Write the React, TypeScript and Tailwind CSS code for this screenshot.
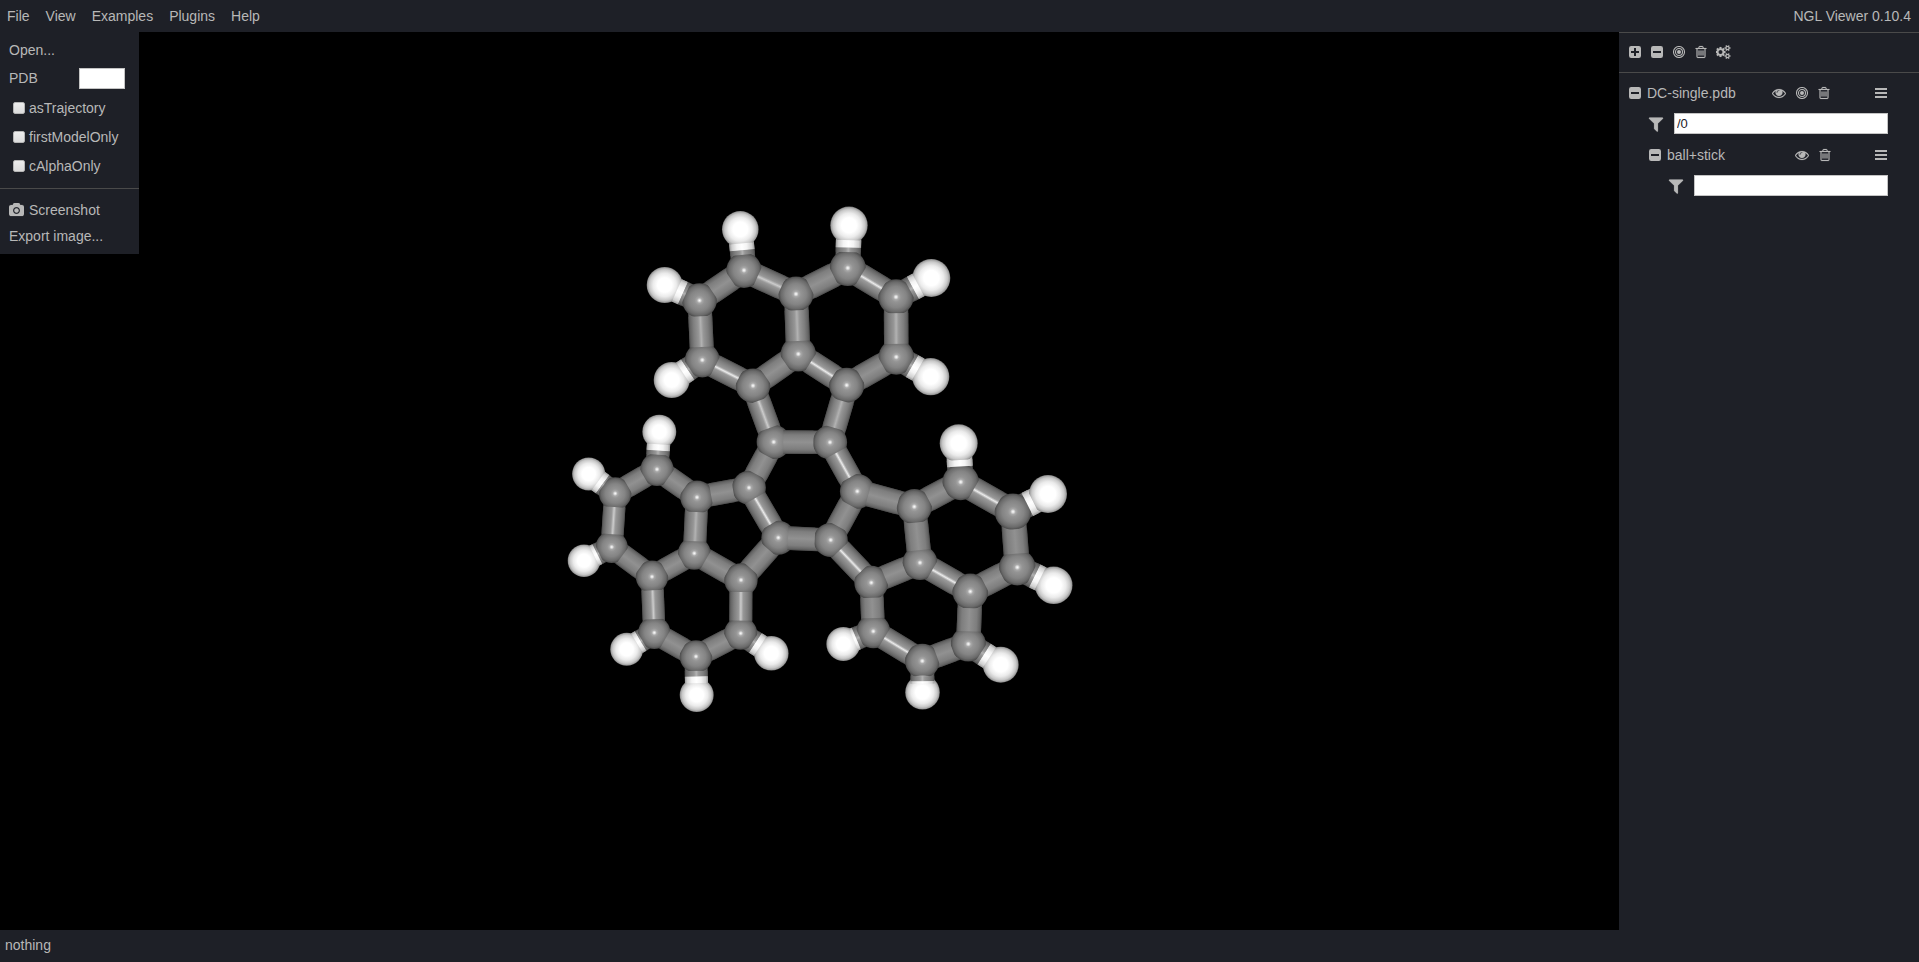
import React, { ReactNode } from "react";

/* ---------- icons ---------- */

const iconPaths = {
  trash: {
    width: 1792,
    d: "M704 736v576q0 14-9 23t-23 9h-64q-14 0-23-9t-9-23v-576q0-14 9-23t23-9h64q14 0 23 9t9 23zm256 0v576q0 14-9 23t-23 9h-64q-14 0-23-9t-9-23v-576q0-14 9-23t23-9h64q14 0 23 9t9 23zm256 0v576q0 14-9 23t-23 9h-64q-14 0-23-9t-9-23v-576q0-14 9-23t23-9h64q14 0 23 9t9 23zm128 724v-948h-896v948q0 22 7 40.5t14.5 27 10.5 8.5h832q3 0 10.5-8.5t14.5-27 7-40.5zm-672-1076h448l-48-117q-7-9-17-11h-317q-10 2-17 11zm928 32v64q0 14-9 23t-23 9h-96v948q0 83-47 143.5t-113 60.5h-832q-66 0-113-58.5t-47-141.5v-952h-96q-14 0-23-9t-9-23v-64q0-14 9-23t23-9h309l70-167q15-37 54-63t79-26h320q40 0 79 26t54 63l70 167h309q14 0 23 9t9 23z",
  },
  eye: {
    width: 1792,
    d: "M1664 960q-152-236-381-353 61 104 61 225 0 185-131.5 316.5t-316.5 131.5-316.5-131.5-131.5-316.5q0-121 61-225-229 117-381 353 133 205 333.5 326.5t434.5 121.5 434.5-121.5 333.5-326.5zm-720-384q0-20-14-34t-34-14q-125 0-214.5 89.5t-89.5 214.5q0 20 14 34t34 14 34-14 14-34q0-86 61-147t147-61q20 0 34-14t14-34zm848 384q0 34-20 69-140 230-376.5 368.5t-499.5 138.5-499.5-139-376.5-368q-20-35-20-69t20-69q140-229 376.5-368t499.5-139 499.5 139 376.5 368q20 35 20 69z",
  },
  filter: {
    width: 1792,
    d: "M1595 295q17 41-14 70l-493 493v742q0 42-39 59-13 5-25 5-27 0-45-19l-256-256q-19-19-19-45v-486l-493-493q-31-29-14-70 17-39 59-39h1280q42 0 59 39z",
  },
  camera: {
    width: 1920,
    d: "M960 672q119 0 203.5 84.5t84.5 203.5-84.5 203.5-203.5 84.5-203.5-84.5-84.5-203.5 84.5-203.5 203.5-84.5zm704-416q106 0 181 75t75 181v896q0 106-75 181t-181 75h-1408q-106 0-181-75t-75-181v-896q0-106 75-181t181-75h224l51-136q19-49 69.5-84.5t103.5-35.5h512q53 0 103.5 35.5t69.5 84.5l51 136h224zm-704 1152q185 0 316.5-131.5t131.5-316.5-131.5-316.5-316.5-131.5-316.5 131.5-131.5 316.5 131.5 316.5 316.5 131.5z",
  },
  cogs: {
    width: 1920,
    d: "M832 896q0-106-75-181t-181-75-181 75-75 181 75 181 181 75 181-75 75-181zm768 512q0-52-38-90t-90-38-90 38-38 90q0 53 37.5 90.5t90.5 37.5 90.5-37.5 37.5-90.5zm0-1024q0-52-38-90t-90-38-90 38-38 90q0 53 37.5 90.5t90.5 37.5 90.5-37.5 37.5-90.5zm-384 421v185q0 10-7 19.5t-16 10.5l-155 24q-11 35-32 76 34 48 90 115 7 11 7 20 0 12-7 19-23 30-82.5 89.5t-78.5 59.5q-11 0-21-7l-115-90q-37 19-77 31-11 108-23 155-7 24-30 24h-186q-11 0-20-7.5t-10-17.5l-23-153q-34-10-75-31l-118 89q-7 7-20 7-11 0-21-8-144-133-144-160 0-9 7-19 10-14 41-53t47-61q-23-44-35-82l-152-24q-10-1-17-9.5t-7-19.5v-185q0-10 7-19.5t16-10.5l155-24q11-35 32-76-34-48-90-115-7-11-7-20 0-12 7-20 22-30 82-89t79-59q11 0 21 7l115 90q34-18 77-32 11-108 23-154 7-24 30-24h186q11 0 20 7.5t10 17.5l23 153q34 10 75 31l118-89q8-7 20-7 11 0 21 8 144 133 144 160 0 8-7 19-12 16-42 54t-45 60q23 48 34 82l152 23q10 2 17 10.5t7 19.5zm640 533v140q0 16-149 31-12 27-30 52 51 113 51 138 0 4-4 7-122 71-124 71-8 0-46-47t-52-68q-20 2-30 2t-30-2q-14 21-52 68t-46 47q-2 0-124-71-4-3-4-7 0-25 51-138-18-25-30-52-149-15-149-31v-140q0-16 149-31 13-29 30-52-51-113-51-138 0-4 4-7 4-2 35-20t59-34 30-16q8 0 46 46.5t52 67.5q20-2 30-2t30 2q51-71 92-112l6-2q4 0 124 70 4 3 4 7 0 25-51 138 17 23 30 52 149 15 149 31zm0-1024v140q0 16-149 31-12 27-30 52 51 113 51 138 0 4-4 7-122 71-124 71-8 0-46-47t-52-68q-20 2-30 2t-30-2q-14 21-52 68t-46 47q-2 0-124-71-4-3-4-7 0-25 51-138-18-25-30-52-149-15-149-31v-140q0-16 149-31 13-29 30-52-51-113-51-138 0-4 4-7 4-2 35-20t59-34 30-16q8 0 46 46.5t52 67.5q20-2 30-2t30 2q51-71 92-112l6-2q4 0 124 70 4 3 4 7 0 25-51 138 17 23 30 52 149 15 149 31z",
  },
};

function Glyph({ name, className = "h-[14px]" }: { name: keyof typeof iconPaths; className?: string }) {
  const icon = iconPaths[name];
  return (
    <svg
      viewBox={`0 0 ${icon.width} 1792`}
      className={`${className} w-auto shrink-0`}
      fill="currentColor"
      stroke="currentColor"
      strokeWidth="20"
      aria-hidden="true"
    >
      <path d={icon.d} />
    </svg>
  );
}

function SquareIcon({ plus = false }: { plus?: boolean }) {
  return (
    <svg viewBox="0 0 12 12" className="size-3 shrink-0" aria-hidden="true">
      <path
        fill="currentColor"
        fillRule="evenodd"
        d={
          plus
            ? "M2.2 0H9.8A2.2 2.2 0 0 1 12 2.2V9.8A2.2 2.2 0 0 1 9.8 12H2.2A2.2 2.2 0 0 1 0 9.8V2.2A2.2 2.2 0 0 1 2.2 0ZM5 2V5H2V7H5V10H7V7H10V5H7V2Z"
            : "M2.2 0H9.8A2.2 2.2 0 0 1 12 2.2V9.8A2.2 2.2 0 0 1 9.8 12H2.2A2.2 2.2 0 0 1 0 9.8V2.2A2.2 2.2 0 0 1 2.2 0ZM2 5V7H10V5Z"
        }
      />
    </svg>
  );
}

function TargetIcon() {
  return (
    <svg viewBox="0 0 12 12" className="size-3 shrink-0" aria-hidden="true">
      <circle cx="6" cy="6" r="5.5" fill="none" stroke="currentColor" strokeWidth="1.1" />
      <circle cx="6" cy="6" r="3.5" fill="none" stroke="currentColor" strokeWidth="1.1" />
      <circle cx="6" cy="6" r="2" fill="currentColor" />
    </svg>
  );
}

function BarsIcon() {
  return (
    <svg viewBox="0 0 12 10" className="h-[10px] w-3 shrink-0" fill="currentColor" aria-hidden="true">
      <rect width="12" height="2" />
      <rect y="4" width="12" height="2" />
      <rect y="8" width="12" height="2" />
    </svg>
  );
}

function IconButton({ label, className = "", children }: { label: string; className?: string; children: ReactNode }) {
  return (
    <button type="button" aria-label={label} className={`flex shrink-0 cursor-pointer items-center justify-center ${className}`}>
      {children}
    </button>
  );
}

/* ---------- molecule ---------- */

type Atom = [x: number, y: number, r: number];

const carbons: Atom[] = [
  [744, 270.3, 17.6], [699.5, 300.5, 17.3], [796, 294, 17.5], [847.8, 268, 18], [896, 297, 17.7],
  [896.3, 357, 17.7], [798.3, 354, 17.6], [702.3, 360, 17.4], [753, 385.7, 17.2], [846.7, 385.2, 17.5],
  [657, 469.3, 16.6], [615.2, 493.5, 16.2], [697, 497.3, 16.7], [611.7, 547, 16], [694.3, 553.3, 16.4],
  [652, 576.7, 16.2], [749, 487.7, 16.9], [773.7, 442, 17.1], [830, 442.3, 17.1], [778.3, 537.7, 17],
  [830.7, 540, 17.1], [741, 580, 16.7], [740.7, 633.3, 16.5], [654.3, 632.7, 16.2], [696, 656.5, 16.3],
  [857.3, 491.3, 17.4], [914.3, 506.7, 17.6], [960.7, 482, 18.2], [1013, 511.7, 18.3], [1017.3, 567.3, 18.2],
  [920, 562.7, 17.4], [970.3, 591.5, 17.9], [871.3, 582.7, 17], [873.3, 631.3, 16.9], [968.3, 644, 17.5],
  [922.3, 661, 17.3],
];

/* each hydrogen, the carbon it is bonded to, how much of its radius stays clear of the bond, where the bond turns white */
const hydrogens: [atom: Atom, carbon: number, cut: number, turn: number][] = [
  [[740.3, 229.3, 18.3], 0, 0.77, 0.49],
  [[849, 225.3, 18.7], 3, 0.79, 0.48],
  [[664.7, 285, 18], 1, 0.74, 0.48],
  [[671.7, 380, 18], 7, 0.74, 0.48],
  [[931.3, 278, 19], 4, 0.78, 0.48],
  [[930.7, 376.7, 18.6], 5, 0.78, 0.46],
  [[659.3, 431.7, 17], 10, 0.74, 0.5],
  [[588.7, 474, 16.6], 11, 0.72, 0.48],
  [[584, 560.7, 16.3], 13, 0.7, 0.52],
  [[626.7, 649.3, 16.5], 23, 0.72, 0.5],
  [[696.7, 695, 17], 24, 0.69, 0.52],
  [[771.3, 653.3, 17.3], 22, 0.76, 0.48],
  [[958.7, 443.3, 19], 27, 0.88, 0.4],
  [[1048, 494, 19], 28, 0.88, 0.41],
  [[1053.7, 585.3, 18.8], 29, 0.8, 0.48],
  [[1000.7, 664.7, 18], 34, 0.74, 0.49],
  [[922.5, 692.3, 17.3], 35, 0.5, 0.65],
  [[843.3, 644, 17], 33, 0.66, 0.57],
];

/* carbon pair, shine level, and the share of each radius that stays clear of the bond */
const bonds: [a: number, b: number, shine: 0 | 1 | 2 | 3, cutA: number, cutB: number][] = [
  [0, 1, 0, 0.9, 0.9], [0, 2, 2, 0.85, 0.93], [2, 3, 0, 0.9, 0.9], [3, 4, 3, 0.85, 0.93],
  [4, 5, 1, 0.91, 0.74], [5, 9, 0, 0.9, 0.93], [9, 6, 3, 0.94, 0.84], [6, 2, 1, 0.74, 0.93],
  [6, 8, 0, 0.9, 0.9], [8, 7, 3, 0.94, 0.82], [7, 1, 1, 0.75, 0.91], [8, 17, 2, 0.93, 0.85],
  [9, 18, 1, 0.93, 0.88], [17, 18, 0, 0.56, 0.97], [17, 16, 0, 0.9, 0.9], [16, 19, 3, 0.72, 0.9],
  [19, 20, 0, 0.57, 0.93], [20, 25, 0, 0.9, 0.9], [25, 18, 3, 0.9, 0.72], [16, 12, 0, 0.95, 0.85],
  [12, 10, 0, 0.93, 0.85], [10, 11, 0, 0.9, 0.9], [11, 13, 2, 0.84, 0.8], [13, 15, 0, 0.85, 0.93],
  [15, 14, 0, 0.9, 0.9], [14, 12, 1, 0.74, 0.88], [14, 21, 0, 0.8, 0.95], [21, 19, 0, 0.9, 0.9],
  [21, 22, 2, 0.72, 0.77], [22, 24, 0, 0.92, 0.9], [24, 23, 0, 0.95, 0.78], [23, 15, 2, 0.83, 0.84],
  [25, 26, 0, 0.66, 0.96], [26, 27, 0, 0.9, 0.95], [27, 28, 3, 0.82, 0.95], [28, 29, 0, 0.96, 0.75],
  [29, 31, 0, 0.96, 0.9], [31, 30, 3, 0.94, 0.82], [30, 26, 0, 0.72, 0.9], [30, 32, 0, 0.96, 0.86],
  [32, 20, 3, 0.9, 0.8], [32, 33, 0, 0.88, 0.78], [33, 35, 3, 0.76, 0.96], [35, 34, 0, 0.88, 0.96],
  [34, 31, 0, 0.72, 0.93],
];

/* a straight tube between two distances measured along the line from a to b */
function Tube({ a, b, from, to, fill }: { a: Atom; b: Atom; from: number; to: number; fill: string }) {
  const angle = (Math.atan2(b[1] - a[1], b[0] - a[0]) * 180) / Math.PI;
  const half = ((a[2] + b[2]) / 2) * 0.69;
  return (
    <rect
      x={from}
      y={-half}
      width={Math.max(0, to - from)}
      height={half * 2}
      fill={`url(#${fill})`}
      transform={`translate(${a[0]} ${a[1]}) rotate(${angle})`}
    />
  );
}

const length = (a: Atom, b: Atom) => Math.hypot(b[0] - a[0], b[1] - a[1]);

function TubeGradient({ id, stops }: { id: string; stops: [number, string][] }) {
  return (
    <linearGradient id={id} x1="0" y1="0" x2="0" y2="1">
      {stops.map(([offset, color]) => (
        <stop key={offset} offset={offset} stopColor={color} />
      ))}
    </linearGradient>
  );
}

function Molecule() {
  return (
    <svg viewBox="0 32 1619 898" className="size-full" role="img" aria-label="Ball and stick model">
      <defs>
        <TubeGradient id="tube0" stops={[[0, "#4a4a4a"], [0.06, "#646464"], [0.2, "#7e7e7e"], [0.5, "#919191"], [0.8, "#7e7e7e"], [0.94, "#646464"], [1, "#4a4a4a"]]} />
        <TubeGradient id="tube1" stops={[[0, "#4a4a4a"], [0.06, "#646464"], [0.2, "#7e7e7e"], [0.4, "#969696"], [0.5, "#b2b2b2"], [0.6, "#969696"], [0.8, "#7e7e7e"], [0.94, "#646464"], [1, "#4a4a4a"]]} />
        <TubeGradient id="tube2" stops={[[0, "#4a4a4a"], [0.06, "#646464"], [0.2, "#7e7e7e"], [0.4, "#989898"], [0.5, "#cccccc"], [0.6, "#989898"], [0.8, "#7e7e7e"], [0.94, "#646464"], [1, "#4a4a4a"]]} />
        <TubeGradient id="tube3" stops={[[0, "#4a4a4a"], [0.06, "#646464"], [0.2, "#7e7e7e"], [0.41, "#9a9a9a"], [0.5, "#ececec"], [0.59, "#9a9a9a"], [0.8, "#7e7e7e"], [0.94, "#646464"], [1, "#4a4a4a"]]} />
        <TubeGradient id="tubeWhite" stops={[[0, "#9a9a9a"], [0.1, "#cfcfcf"], [0.3, "#f4f4f4"], [0.5, "#ffffff"], [0.7, "#f4f4f4"], [0.9, "#cfcfcf"], [1, "#9a9a9a"]]} />
        <radialGradient id="carbon">
          <stop offset="0" stopColor="#ffffff" />
          <stop offset="0.07" stopColor="#dcdcdc" />
          <stop offset="0.15" stopColor="#a8a8a8" />
          <stop offset="0.28" stopColor="#949494" />
          <stop offset="0.6" stopColor="#848484" />
          <stop offset="0.85" stopColor="#6a6a6a" />
          <stop offset="0.96" stopColor="#525252" />
          <stop offset="1" stopColor="#424242" />
        </radialGradient>
        <radialGradient id="hydrogen">
          <stop offset="0" stopColor="#ffffff" />
          <stop offset="0.4" stopColor="#ffffff" />
          <stop offset="0.65" stopColor="#ebebeb" />
          <stop offset="0.85" stopColor="#c8c8c8" />
          <stop offset="0.95" stopColor="#a2a2a2" />
          <stop offset="1" stopColor="#787878" />
        </radialGradient>
      </defs>

      {bonds.map(([a, b]) => (
        <Tube key={`under-${a}-${b}`} a={carbons[a]} b={carbons[b]} from={8} to={length(carbons[a], carbons[b]) - 8} fill="tube0" />
      ))}
      {hydrogens.map(([atom, c, , turn]) => {
        const full = length(carbons[c], atom);
        return (
          <g key={`under-${c}`}>
            <Tube a={carbons[c]} b={atom} from={8} to={full * turn} fill="tube1" />
            <Tube a={carbons[c]} b={atom} from={full * turn} to={full - 6} fill="tubeWhite" />
          </g>
        );
      })}
      {carbons.map(([x, y, r], i) => (
        <circle key={i} cx={x} cy={y} r={r} fill="url(#carbon)" />
      ))}
      {bonds.map(([a, b, shine, cutA, cutB]) => (
        <Tube
          key={`over-${a}-${b}`}
          a={carbons[a]}
          b={carbons[b]}
          from={carbons[a][2] * cutA}
          to={length(carbons[a], carbons[b]) - carbons[b][2] * cutB}
          fill={`tube${shine}`}
        />
      ))}
      {hydrogens.map(([atom, c, cut, turn]) => {
        const full = length(carbons[c], atom);
        return (
          <g key={`over-${c}`}>
            <circle cx={atom[0]} cy={atom[1]} r={atom[2]} fill="url(#hydrogen)" />
            <Tube a={carbons[c]} b={atom} from={carbons[c][2] * 0.88} to={full * turn} fill="tube1" />
            <Tube a={carbons[c]} b={atom} from={full * turn} to={full - atom[2] * cut} fill="tubeWhite" />
          </g>
        );
      })}
    </svg>
  );
}

/* ---------- panels ---------- */

const menus = ["File", "View", "Examples", "Plugins", "Help"];
const options = ["asTrajectory", "firstModelOnly", "cAlphaOnly"];
const fieldClass = "h-[21px] min-w-0 border border-[#c4c4c4] bg-white px-[2px] text-[13px] text-[#1e2027] outline-none";

function FileMenu() {
  return (
    <div className="absolute top-0 left-0 flex w-[139px] flex-col bg-[#1e2027] pb-[5px]">
      <button type="button" className="mt-1 flex h-7 cursor-pointer items-center px-[9px]">Open...</button>
      <div className="flex h-7 items-center justify-between pr-[14px] pl-[9px]">
        <label htmlFor="pdb">PDB</label>
        <input id="pdb" type="text" className={`${fieldClass} w-[46px]`} />
      </div>
      <div className="flex flex-col pt-px pb-2">
        {options.map((name) => (
          <label key={name} className="flex h-[29px] items-center gap-1 pl-[13px]">
            <input
              type="checkbox"
              className="size-3 appearance-none rounded-[2px] border border-[#b5b5b5] bg-linear-to-b from-[#ededed] to-[#dcdcdc]"
            />
            {name}
          </label>
        ))}
      </div>
      <hr className="border-[#4a4a4a]" />
      <button type="button" className="mt-2 flex h-[26px] cursor-pointer items-center gap-[5px] px-[9px]">
        <Glyph name="camera" />
        Screenshot
      </button>
      <button type="button" className="flex h-[26px] cursor-pointer items-center px-[9px]">Export image...</button>
    </div>
  );
}

function FilterRow({ id, label, value }: { id: string; label: string; value: string }) {
  return (
    <div className="flex h-[31px] items-center pr-[31px]">
      <label htmlFor={id} aria-label={label} className="-ml-[2px] mr-[9px]">
        <Glyph name="filter" className="h-[18px]" />
      </label>
      <input id={id} type="text" defaultValue={value} className={`${fieldClass} flex-1`} />
    </div>
  );
}

function Sidebar() {
  return (
    <aside className="flex w-[300px] shrink-0 flex-col border-t border-[#4a4a4a]">
      <div className="flex h-10 items-center gap-[10px] border-b border-[#4a4a4a] pb-[2px] pl-[10px]">
        <IconButton label="Expand all"><SquareIcon plus /></IconButton>
        <IconButton label="Collapse all"><SquareIcon /></IconButton>
        <IconButton label="Center all"><TargetIcon /></IconButton>
        <IconButton label="Delete all" className="w-[11px]"><Glyph name="trash" /></IconButton>
        <IconButton label="Settings"><Glyph name="cogs" /></IconButton>
      </div>
      <div className="flex flex-col pt-[5px] pl-[10px]">
        <div className="flex h-[30px] items-center pr-8">
          <IconButton label="Collapse structure"><SquareIcon /></IconButton>
          <span className="flex-1 pl-[6px]">DC-single.pdb</span>
          <div className="flex w-[115px] items-center gap-[10px]">
            <IconButton label="Toggle structure"><Glyph name="eye" /></IconButton>
            <IconButton label="Center structure"><TargetIcon /></IconButton>
            <IconButton label="Delete structure" className="w-[11px]"><Glyph name="trash" /></IconButton>
            <IconButton label="Structure menu" className="ml-auto"><BarsIcon /></IconButton>
          </div>
        </div>
        <div className="flex flex-col pl-5">
          <FilterRow id="structure-selection" label="Structure selection" value="/0" />
          <div className="flex h-[31px] items-center pr-8">
            <IconButton label="Collapse representation"><SquareIcon /></IconButton>
            <span className="flex-1 pl-[6px]">ball+stick</span>
            <div className="flex w-[92px] items-center gap-[10px]">
              <IconButton label="Toggle representation"><Glyph name="eye" /></IconButton>
              <IconButton label="Delete representation" className="w-[11px]"><Glyph name="trash" /></IconButton>
              <IconButton label="Representation menu" className="ml-auto"><BarsIcon /></IconButton>
            </div>
          </div>
          <div className="pl-5">
            <FilterRow id="representation-selection" label="Representation selection" value="" />
          </div>
        </div>
      </div>
    </aside>
  );
}

export default function App() {
  return (
    <div className="flex h-screen flex-col bg-[#1e2027] font-['Liberation_Sans',sans-serif] text-sm leading-5 text-[#b8b8b8]">
      <header className="flex h-8 shrink-0 items-center justify-between pr-2 pl-[7px]">
        <nav className="flex gap-4">
          {menus.map((name) => (
            <button key={name} type="button" className="cursor-pointer">{name}</button>
          ))}
        </nav>
        <span>NGL Viewer 0.10.4</span>
      </header>
      <div className="flex min-h-0 flex-1">
        <main className="relative min-w-0 flex-1 bg-black">
          <Molecule />
          <FileMenu />
        </main>
        <Sidebar />
      </div>
      <footer className="flex h-8 shrink-0 items-center px-[5px] pb-[2px]">nothing</footer>
    </div>
  );
}
